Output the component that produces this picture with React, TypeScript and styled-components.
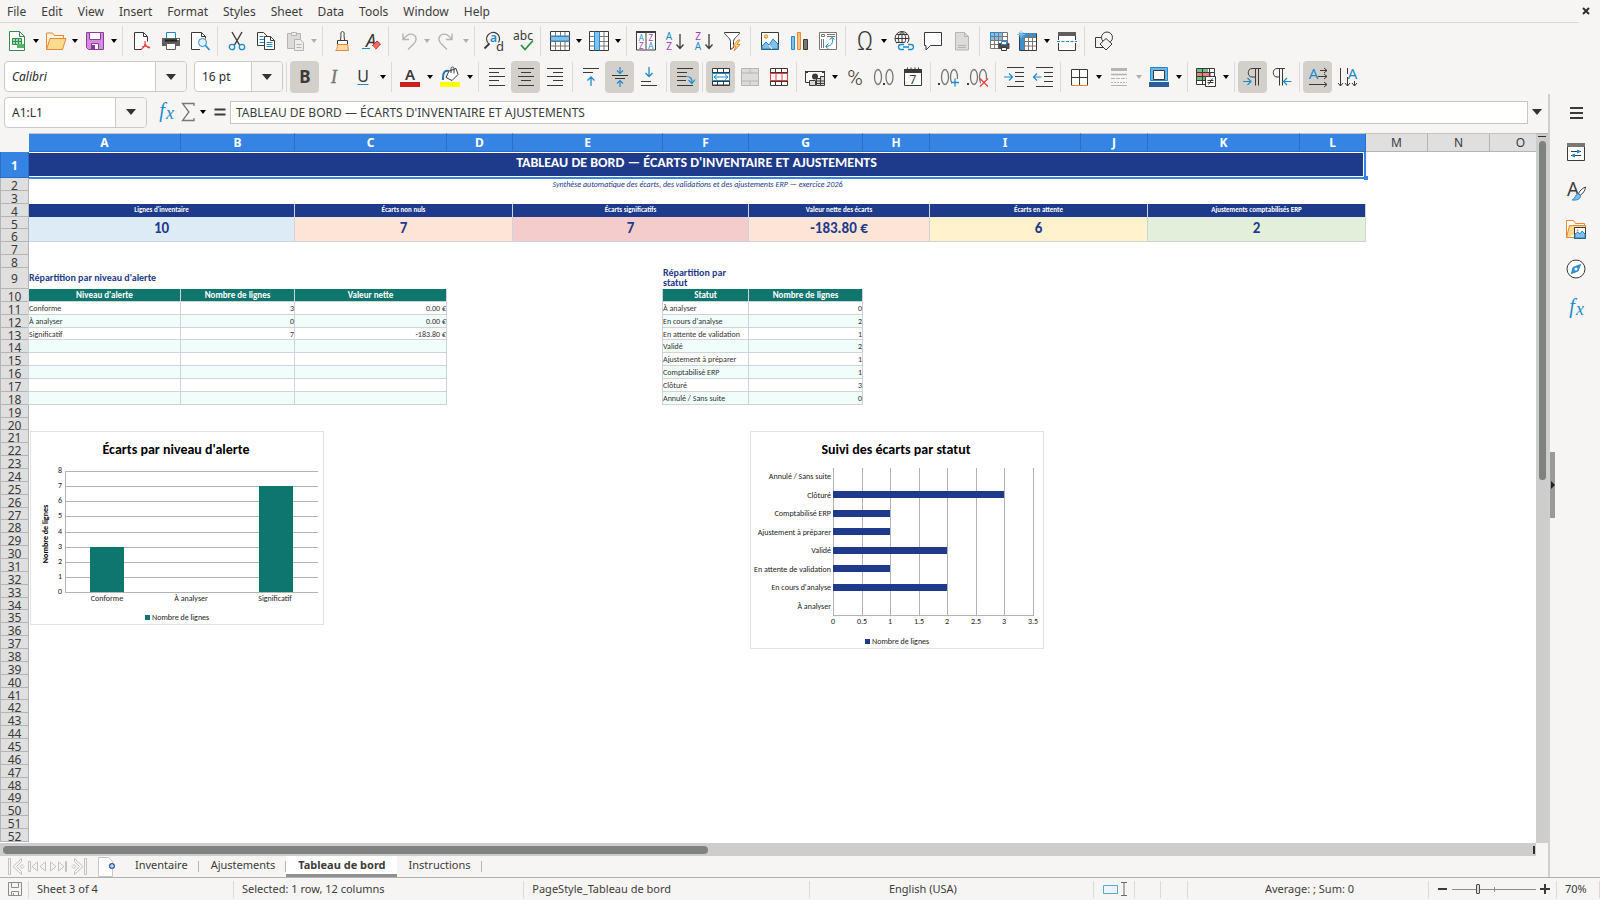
import React from 'react';
import styled, { createGlobalStyle, css } from 'styled-components';

const UI = '"Noto Sans", "Open Sans", sans-serif';
const CELL = 'Carlito, Lato, "Noto Sans", sans-serif';
const INK = '#3a3a38';
const GREY = '#797774';
const BLUE = '#1e8bcd';
const SKY = '#83beec';
const ORANGE = '#ed8733';
const RED = '#ed3d3b';
const GREEN = '#309048';
const PURPLE = '#a33eb5';
const DIM = '#b5b4b2';
const NAVY = '#1e3a8a';
const TEAL = '#0f766e';
const LINE = '#cfd4da';

const Global = createGlobalStyle`
  *, *::before, *::after { box-sizing: border-box; }
  html, body { margin: 0; }
  body { background: #f6f5f4; font-family: ${UI}; color: #3d3d3b; }
  button, input, select { font: inherit; color: inherit; margin: 0; padding: 0; border: 0; background: none; }
`;

/* ---------- icons ---------- */

const p = (d: string, stroke: string = INK, fill = 'none', w = 1) => (
  <path d={d} stroke={stroke} fill={fill} strokeWidth={w} />
);
const t = (x: number, y: number, size: number, text: string, fill: string = INK, extra: React.SVGProps<SVGTextElement> = {}) => (
  <text x={x} y={y} fontSize={size} fill={fill} stroke="none" textAnchor="middle" fontFamily={UI} {...extra}>
    {text}
  </text>
);
const serif = { fontFamily: '"Liberation Serif", serif' };
const light = { fontFamily: 'Roboto, sans-serif', fontWeight: 300 };
const ring = (cx: number, cy: number) => <ellipse cx={cx} cy={cy} rx="3.5" ry="7.5" fill="none" stroke={GREY} strokeWidth="1.3" />;
const dot = (x: number, y: number) => <rect x={x} y={y} width="2" height="2" fill={INK} />;

const gridBox = 'M2.5 2.5h19v19h-19z';

const icons: Record<string, React.ReactNode> = {
  newDoc: (<>
    {p('M4.5 2.5h10l5 5v14h-15z', GREEN, '#fff')}{p('M14.5 2.5v5h5', GREEN)}
    {p('M7.5 9.5h9v3h-9zM7.5 12.5h9v3h-9zM10.5 9.5v6M13.5 9.5v6', GREEN, '#a8dcb5')}
    {p('M12 15h7v4h-7z', 'none', '#58b36d')}
  </>),
  open: (<>
    {p('M2.5 20.5v-16.5h6l2 2.5h9v3', ORANGE, '#fdf3de')}{p('M2.5 20.5l3.5-11h16l-3.5 11z', ORANGE, '#f8db8f')}
  </>),
  save: (<>
    {p('M3.5 3.5h17v17h-15l-2-2z', '#8c3a9b', '#d58be0')}{p('M6.5 3.5h11v7h-11z', '#8c3a9b', '#fff')}
    {p('M8.5 20.5v-6h7v6z', '#8c3a9b', '#fff')}{p('M9 16h3v4h-3z', 'none', '#8c3a9b')}
  </>),
  pdf: (<>
    {p('M12 20.5h-7.5v-17h9l4 4v5', INK, '#fff')}{p('M13.5 3.5v4h4')}
    {p('M15 12c1 3-1 7-4 8.5M15 12c-.5 4 2 7 5 7M12 18c3-1.5 5-1 8 .5', RED, 'none', 1.2)}
  </>),
  print: (<>
    {p('M7.5 9.5v-6h9v6', BLUE, '#fff')}{p('M3 9h18v8h-18z', 'none', '#5f5e5c')}
    {p('M6 11.5h12', '#222', 'none', 2)}{p('M7.5 14.5h9v6h-9z', '#5f5e5c', '#fff')}{p('M18 10.5h2', '#fff')}
  </>),
  preview: (<>
    {p('M12 20.5h-8.5v-17h10l4 4v2', INK, '#fff')}{p('M13.5 3.5v4h4')}
    <circle cx="14.5" cy="13.5" r="4" fill="#e6f2fb" stroke={BLUE} />{p('M17.5 16.5l4 4.5', BLUE, 'none', 1.6)}
  </>),
  cut: (<>
    {p('M7 3l7.5 13M17 3l-7.5 13', INK, 'none', 1.4)}
    <circle cx="7" cy="18" r="2.7" fill="none" stroke={BLUE} strokeWidth="1.3" /><circle cx="17" cy="18" r="2.7" fill="none" stroke={BLUE} strokeWidth="1.3" />
  </>),
  copy: (<>
    {p('M3.5 3.5h6l4 4v9h-10z', INK, '#fff')}{p('M5.5 7.5h4M5.5 10.5h5M5.5 13.5h5', BLUE)}
    {p('M10.5 7.5h6l4 4v9h-10z', INK, '#fff')}{p('M16.5 7.5v4h4')}{p('M12.5 13.5h6M12.5 15.5h6M12.5 17.5h6', BLUE)}
  </>),
  paste: (<>
    {p('M4.5 4.5h13v15h-13z', DIM, '#dcdbd9')}{p('M8.5 6.5v-3h5v3z', DIM, '#eee')}{p('M11.5 10.5h6l3 3v8h-9z', DIM, '#ececea')}
    {p('M13.5 15.5h5M13.5 18.5h5', DIM)}
  </>),
  brush: (<>
    {p('M10.5 11.5l.5-5c-.5-2 0-4 1.5-4s2 2 1.5 4l.5 5', INK, '#fff')}{p('M7.5 15.5v-4h10v4', INK, '#fff')}
    {p('M7.5 15.5h10l1 6h-13c1.5-1 2-3 2-6z', ORANGE, '#fbd9a8')}
  </>),
  clear: (<>
    {t(12, 18, 18, 'A', INK, { fontStyle: 'italic' })}{p('M3 19.5h8', BLUE)}{p('M13 17l5-5 3.5 3-5 5.5z', '#c33', '#f26a66')}{p('M13 17l3.5 3.5', '#fff')}
  </>),
  undo: p('M7 4.5v6h6M7.5 10c3-4 7-6 10.5-4 3.5 2.5 2 7-.5 9l-5.5 5.5', DIM, 'none', 1.4),
  redo: p('M17 4.5v6h-6M16.5 10c-3-4-7-6-10.5-4-3.5 2.5-2 7 .5 9l5.5 5.5', DIM, 'none', 1.4),
  find: (<>
    {t(11.5, 13, 12, 'a', BLUE, { fontWeight: 600 })}{p('M7 15a6.5 6.5 0 1 1 9.5-1.5', INK, 'none', 1.2)}{p('M7.5 14.5l-5 5', INK, 'none', 1.8)}{t(18, 21.5, 13, 'd', INK)}
  </>),
  spell: (<>{t(12, 11, 12, 'abc')}{p('M10 16l4 4.5 8-9', GREEN, 'none', 1.8)}</>),
  rows: (<>
    {p(gridBox, INK, '#fff')}{p('M3 7h18v5h-18z', 'none', SKY)}{p('M2.5 7.5h19M2.5 12.5h19M2.5 17h19M7.5 12v9M12.5 12v9M17 12v9M7.5 3v4M12.5 3v4M17 3v4', GREY)}
    {p('M2.5 7h19M2.5 12h19', BLUE)}
  </>),
  cols: (<>
    {p(gridBox, INK, '#fff')}{p('M7 3h5v18h-5z', 'none', SKY)}{p('M12 7.5h9M3 7.5h4M12 12.5h9M3 12.5h4M12 17h9M3 17h4M17 3v18', GREY)}
    {p('M7.5 2.5v19M12.5 2.5v19', BLUE)}
  </>),
  sort: (<>
    {p('M2.5 3.5h19v17.5h-19zM12 3.5v17', INK, '#fff')}{p('M2 3h20', INK, 'none', 2)}
    {t(7.2, 12, 8, 'A', BLUE)}{t(7.2, 20, 8, 'Z', PURPLE)}{t(16.8, 12, 8, 'Z', PURPLE)}{t(16.8, 20, 8, 'A', BLUE)}
  </>),
  az: (<>{t(6, 10.5, 10, 'A', BLUE)}{t(6, 21, 10, 'Z', PURPLE)}{p('M17 5v14M13.5 15.5l3.5 4 3.5-4', INK, 'none', 1.3)}</>),
  za: (<>{t(6, 10.5, 10, 'Z', PURPLE)}{t(6, 21, 10, 'A', BLUE)}{p('M17 5v14M13.5 15.5l3.5 4 3.5-4', INK, 'none', 1.3)}</>),
  filter: (<>{p('M3.5 3.5h15c0 3-6 5-6 9v6l-3 2v-8c0-4-6-6-6-9z', INK, '#fff')}{p('M17 11l-5 6h3l-2 5 6-6.5h-3l3-4.5z', ORANGE, '#f8db8f')}</>),
  image: (<>
    {p('M3.5 3.5h17v17h-17z', INK, '#fff')}<circle cx="8" cy="7.5" r="1.7" fill="#f8db8f" stroke={ORANGE} />
    {p('M4 20v-3l4-4 3 3 4-6 5 5v5z', BLUE, SKY)}{p('M11 16l3 4', '#fff')}
  </>),
  chart: (<>{p('M4.5 7.5h3v13h-3z', BLUE, SKY)}{p('M10.5 3.5h3v17h-3z', ORANGE, '#f8c27a')}{p('M16.5 10.5h4v10h-4z', INK, GREY)}</>),
  pivot: (<>
    {p('M3.5 3.5h17v17h-17z', GREY, '#fff')}{p('M5.5 5.5h3v2h-3z', GREY)}{p('M11 5.5h8M11 7.5h8M5.5 10v9M7.5 10v9', GREY)}
    {p('M16 9c2 5-1 8-6 8.5M13.5 10.5l2.5-2 2.5 2M12.5 14.5l-3 3 3 2.5', BLUE)}
  </>),
  omega: t(12, 21, 25, 'Ω', INK, light),
  link: (<>
    <circle cx="10" cy="9.5" r="7" fill="none" stroke={INK} />{p('M10 2.5c-5 4-5 10 0 14M10 2.5c5 4 5 10 0 14M3 9.5h14M4 5.5h12M4 13.5h8M10 2.5v14')}
    {p('M5 14h18v8h-18z', 'none', '#f6f5f4')}
    {p('M12 20.5h-3a2.5 2.5 0 0 1 0-5h3M16 20.5h3a2.5 2.5 0 0 0 0-5h-3M11 18h6', BLUE, 'none', 1.3)}
  </>),
  comment: p('M3.5 3.5h17v13h-11l-4.5 4.5v-4.5h-1.5z', INK, '#fff'),
  header: (<>{p('M5.5 3.5h9l4 4v13.5h-13z', DIM, '#dcdbd9')}{p('M14.5 3.5v4h4M8 16.5h8M8 18.5h8', DIM)}</>),
  prange: (<>
    {p('M3.5 3.5h17v16h-17z', GREY, '#fff')}{p('M3.5 3.5h12v8h-12z', BLUE, SKY)}{p('M3.5 7.5h17M3.5 11.5h17M3.5 15.5h17M7.5 3.5v16M11.5 3.5v16M15.5 3.5v16', GREY)}
    {p('M12 14.5h10v5h-10z', '#4c4b49', '#4c4b49')}{p('M14.5 12.5h5v3h-5z', BLUE, '#fff')}{p('M14.5 18.5h5v3h-5z', INK, '#fff')}
  </>),
  freeze: (<>
    {p('M3.5 4.5h17v17h-17z', INK, '#fff')}{p('M4 4h16v4h-16zM4 8h4v13h-4z', 'none', '#3d8fce')}
    {p('M8 8.5h12M8 12.5h12M8 17h12M8.5 8v13M12.5 4v17M16.5 4v17', GREY)}{p('M5 1.5v8M1 5.5h8M2.5 3l5 5M7.5 3l-5 5', SKY)}
  </>),
  split: (<>{p('M3.5 3.5h17v18h-17z', INK, '#fff')}{p('M3 3h18v4h-18z', 'none', '#5f5e5c')}{p('M2 12.5h20', '#f6f5f4', 'none', 3)}<path d="M2 12.5h20" stroke={BLUE} strokeDasharray="3 1.5" /></>),
  shapes: (<>{p('M3.5 8.5h10v10h-10z')}<circle cx="15" cy="8.5" r="5.5" fill="#f6f5f4" stroke={INK} />{p('M14 9.5l6 5.5-6 6-6-6z', INK, '#f6f5f4')}</>),
  bold: t(12, 18, 17, 'B', INK, { fontWeight: 700 }),
  italic: t(12, 18, 18, 'I', GREY, { ...serif, fontStyle: 'italic', stroke: GREY, strokeWidth: 0.4 }),
  underline: (<>{t(12, 17, 16, 'U', INK)}{p('M6.5 19.5h11', BLUE)}</>),
  fontColor: (<>{t(12, 14.5, 15, 'A', INK, { fontWeight: 600 })}{p('M2 17h20v5h-20z', 'none', '#c9211e')}</>),
  highlight: (<>
    {p('M11 6l7-2.5 2 6-6 6-6-3z', INK, '#fff')}{p('M13 8v-4.5c0-2 3-2 3 0v5')}{p('M11 6c-4-1-6 1-6 7v2', '#2a6fae', 'none', 2)}{p('M2 17h20v5h-20z', 'none', '#ffff00')}
  </>),
  left: p('M4 3.5h16M4 7.5h10M4 11.5h16M4 15.5h10M4 20.5h16', INK),
  center: p('M4 3.5h16M7 7.5h10M4 11.5h16M7 15.5h10M4 20.5h16', INK),
  right: p('M4 3.5h16M10 7.5h10M4 11.5h16M10 15.5h10M4 20.5h16', INK),
  top: (<>{p('M4 3.5h16M4 7.5h10', INK)}{p('M12 21v-9M8.5 15.5l3.5-3.5 3.5 3.5', BLUE, 'none', 1.3)}</>),
  middle: (<>{p('M4 10.5h16M7 13.5h10', INK)}{p('M12 2v6M9 5.5l3 3 3-3M12 22v-6M9 18.5l3-3 3 3', BLUE, 'none', 1.2)}</>),
  bottom: (<>{p('M4 16.5h10M4 20.5h16', INK)}{p('M12 2v9M8.5 8l3.5 3.5 3.5-3.5', BLUE, 'none', 1.3)}</>),
  wrap: (<>{p('M4 3.5h16M4 7.5h10M4 11.5h9M4 15.5h9M4 20.5h16', INK)}{p('M13 11.5c5 0 6 2 6 6M15.5 15l3.5 3.5 3-4', BLUE, 'none', 1.2)}</>),
  merge: (<>
    {p('M3.5 3.5h17v17h-17z', INK, '#fff')}{p('M3.5 7.5h17M3.5 16.5h17M8.5 3.5v4M14.5 3.5v4M8.5 16.5v4M14.5 16.5v4M3.5 20h17')}
    {p('M3.5 8.5h17v7h-17z', BLUE, '#fff')}{p('M5 12h14M8 9.5l-3 2.5 3 2.5M16 9.5l3 2.5-3 2.5', BLUE)}
  </>),
  unmerge: (<>{p('M3.5 3.5h17v17h-17z', DIM, '#dcdbd9')}{p('M3.5 8h17M3.5 16h17M12 3.5v4.5M12 16v4.5', DIM)}</>),
  mergeCells: (<>
    {p('M3.5 3.5h17v17h-17z', INK, '#fff')}{p('M3.5 7.5h17M3.5 16.5h17M8.5 3.5v4M14.5 3.5v4M8.5 16.5v4M14.5 16.5v4')}
    {p('M3.5 8.5h17v7h-17zM9 8.5v7M15 8.5v7', RED, '#fff')}
  </>),
  currency: (<>
    {p('M2.5 6.5h19v11h-19z', INK, '#fff')}<circle cx="12" cy="11.5" r="3" fill={INK} />{p('M2 6h3v2h-3zM19 6h3v2h-3z', 'none', INK)}
    {p('M6.5 15.5h6v5h-6zM13.5 13.5h4v7h-4zM17.5 11.5h4v9h-4zM13.5 16h8M13.5 18.5h8', INK, '#d9d8d6')}
  </>),
  percent: t(12, 19.5, 21, '%', INK, light),
  number: (<>{ring(6, 12)}{ring(17.5, 12)}{dot(11, 18)}</>),
  date: (<>{p('M3.5 5.5h17v15h-17z', INK, '#fff')}{p('M3 4h18v4h-18z', 'none', INK)}{p('M6.5 2.5v4M10 2.5v2M14 2.5v2M17.5 2.5v4', INK)}{t(12, 18.5, 12, '7')}</>),
  addDec: (<>{dot(1, 18)}{ring(8, 12)}{ring(17, 12)}{p('M15 14h8v8h-8z', 'none', '#f6f5f4')}{p('M14 17.5h8M18 13.5v8', BLUE, 'none', 1.3)}</>),
  delDec: (<>{dot(1, 18)}{ring(8, 12)}{ring(17, 12)}{p('M15 14h8v8h-8z', 'none', '#f6f5f4')}{p('M14 13.5l8 8M22 13.5l-8 8', RED, 'none', 1.3)}</>),
  indent: (<>{p('M5 2.5h17M13 7.5h9M13 11.5h9M13 16.5h9M5 21.5h17', INK)}{p('M2 12h8M7 8.5l3.5 3.5-3.5 3.5', BLUE, 'none', 1.2)}</>),
  outdent: (<>{p('M5 2.5h17M13 7.5h9M13 11.5h9M13 16.5h9M5 21.5h17', INK)}{p('M2.5 12h8M6 8.5l-3.5 3.5 3.5 3.5', BLUE, 'none', 1.2)}</>),
  borders: (<>{p('M4.5 4.5h16v16h-16zM12.5 4.5v16M4.5 12.5h16', INK, '#fff')}{p('M4 20.5h17', ORANGE)}</>),
  borderStyle: (<>{p('M4 4.5h16', DIM, 'none', 3)}{p('M4 9.5h16', DIM, 'none', 1.6)}<path d="M4 13.5h16" stroke={DIM} strokeDasharray="4 1" /><path d="M4 17.5h16" stroke={DIM} strokeDasharray="2 1" />{p('M4 20.5h16', DIM)}</>),
  borderColor: (<>{p('M3.5 2.5h17v13h-17z', BLUE, '#6ab6e8')}{p('M6.5 5.5h11v9h-11z', INK, '#fff')}{p('M2 17h20v5h-20z', 'none', '#2a6099')}</>),
  cond: (<>
    {p('M2.5 3.5h18v16h-18z', INK, '#fff')}{p('M3 4h11v4h-11z', 'none', '#6cc083')}{p('M3 8h14v4h-14z', 'none', '#f2827f')}{p('M3 12h8v4h-8z', 'none', '#6cc083')}
    {p('M2.5 7.5h18M2.5 11.5h9M2.5 15.5h9M8.5 3.5v16M15.5 3.5v8', INK)}{p('M11.5 11.5h10v10h-10z', INK, '#fff')}{p('M13.5 15.5h6M13.5 17.5h6M18.5 13.5l-4 6')}
  </>),
  ltr: (<>{p('M11 3.5h9M14.5 3.5v17M17.5 3.5v17M14 3.5h-3c-5 0-5 8.5 0 8.5h3', INK)}{p('M2 16.5h8M6.5 13l3.5 3.5-3.5 3.5', BLUE, 'none', 1.2)}</>),
  rtl: (<>{p('M7 3.5h8M9.5 3.5v17M12.5 3.5v17M9 3.5h-2c-5 0-5 8.5 0 8.5h2', INK)}{p('M13.5 16.5h8M17 13l-3.5 3.5 3.5 3.5', BLUE, 'none', 1.2)}</>),
  textH: (<>{t(7.5, 13.5, 15, 'A', BLUE)}{p('M14 5.5h7M18 3l3 2.5-3 2.5M12 11.5h9M18 9l3 2.5-3 2.5M3 19.5h18M18 17l3 2.5-3 2.5', INK)}</>),
  textV: (<>{t(17.5, 13.5, 15, 'A', BLUE)}{p('M5.5 3v18M3 18l2.5 3 2.5-3M12.5 3v6M12.5 12v9M10 18l2.5 3 2.5-3M19.5 16v5M17 18l2.5 3 2.5-3', INK)}</>),
  menu: p('M6 7h13M6 12h13M6 17h13', INK, 'none', 2),
  props: (<>{p('M3.5 3.5h17v17h-17z', INK, '#fff')}{p('M3 3h18v4h-18z', 'none', GREY)}{p('M7 11.5h10M7 15.5h10', INK)}{p('M13.5 10l2.5 1.5-2.5 1.5zM10.5 14l-2.5 1.5 2.5 1.5z', BLUE, BLUE)}</>),
  styles: (<>{t(9, 17, 19, 'A')}{p('M21.5 8c-3 1-6 4-7 6.5l2 1.5c2-1 5-5 5-8z', INK, '#fff')}{p('M14 14.5l2.5 2c0 4-4 5-8.5 4.5 3-1 3-5 6-6.5z', BLUE, SKY)}</>),
  gallery: (<>
    {p('M2.5 19.5v-17h7l2 3h9v4', ORANGE, '#fff')}{p('M2.5 19.5l3-12h16v4', ORANGE, '#f8db8f')}{p('M2.5 19.5h8', ORANGE)}
    {p('M10.5 9.5h11v11h-11z', INK, '#fff')}{p('M11 20v-4l3-2 2 2 2-3 3 3v4z', BLUE, SKY)}<circle cx="13.5" cy="12.5" r="1" fill={ORANGE} />
  </>),
  compass: (<><circle cx="12" cy="12" r="9" fill="#fff" stroke={INK} />{p('M16.5 7.5l-2.5 6.5-6.5 2.5 1.5-6z', BLUE, '#3d8fce')}<circle cx="12" cy="12" r="1.5" fill="#fff" /></>),
  fx: (<>{t(8, 17, 20, 'f', BLUE, { ...serif, fontStyle: 'italic' })}{t(16, 19, 18, 'x', BLUE, { ...serif, fontStyle: 'italic' })}</>),
  sum: p('M17 6v-2.5h-11.5l6.5 8.5-6.5 8.5h11.5v-2.5', GREY, 'none', 1.3),
  equals: p('M6.5 9.5h11M6.5 14.5h11', INK, 'none', 2),
};

const Svg = styled.svg`
  display: block;
  flex: none;
  fill: none;
  overflow: visible;
`;
const Icon = ({ name }: { name: string }) => (
  <Svg width="24" height="24" viewBox="0 0 24 24" aria-hidden="true">{icons[name]}</Svg>
);
const Caret = ({ dim, large }: { dim?: boolean; large?: boolean }) => (
  <Svg width={large ? 10 : 6} height={large ? 6 : 4} viewBox="0 0 10 6" preserveAspectRatio="none" aria-hidden="true">
    <path d="M0 0h10l-5 6z" fill={dim ? '#b0afad' : large ? '#333' : '#000'} />
  </Svg>
);

/* ---------- frame ---------- */

const Window = styled.div`
  display: flex;
  flex-direction: column;
  height: 100vh;
  overflow: hidden;
  background: #f6f5f4;
`;
const MenuBar = styled.nav`
  display: flex;
  align-items: center;
  height: 22px;
  flex: none;
  padding-right: 8px;
`;
const MenuItem = styled.button`
  height: 22px;
  padding: 1px 8px 0 7px;
  font-size: 12px;
  line-height: 21px;
`;
const CloseButton = styled.button`
  display: grid;
  place-items: center;
  width: 12px;
  height: 22px;
  margin-left: auto;
`;
const Toolbar = styled.div<{ $first?: boolean }>`
  display: flex;
  align-items: center;
  flex: none;
  height: ${(q) => (q.$first ? 37 : 35)}px;
  padding-left: ${(q) => (q.$first ? 2 : 4)}px;
  ${(q) => q.$first && css`border-top: 1px solid #d9d8d6; margin-right: 21px;`}
`;
const ToolButton = styled.button<{ $on?: boolean }>`
  display: grid;
  place-items: center;
  flex: none;
  width: 29px;
  height: 32px;
  border-radius: 4px;
  background: ${(q) => (q.$on ? '#d3d0cc' : 'transparent')};
`;
const DropButton = styled.button<{ $snug?: boolean }>`
  display: grid;
  place-items: center;
  flex: none;
  width: ${(q) => (q.$snug ? 11 : 10)}px;
  height: 32px;
`;
const Divider = styled.span<{ $snug?: boolean }>`
  flex: none;
  width: 1px;
  height: 30px;
  margin: 0 ${(q) => (q.$snug ? 3 : 4)}px 0 3px;
  background: #dcdad8;
`;
const Combo = styled.label<{ $w: number }>`
  display: flex;
  flex: none;
  width: ${(q) => q.$w}px;
  height: 31px;
  border: 1px solid #cdc9c5;
  border-radius: 4px;
  background: #fff;
  overflow: hidden;
  font-size: 12px;
`;
const comboField = css`
  flex: 1;
  min-width: 0;
  padding: 0 7px;
  outline: none;
  color: #2b2b2b;
`;
const ComboSelect = styled.select<{ $italic?: boolean }>`
  ${comboField}
  appearance: none;
  font-style: ${(q) => (q.$italic ? 'italic' : 'normal')};
`;
const ComboInput = styled.input`
  ${comboField}
`;
const ComboArrow = styled.span`
  display: grid;
  place-items: center;
  width: 31px;
  border-left: 1px solid #cdc9c5;
  background: #f6f5f4;
`;
const Gap = styled.span`
  width: 7px;
  flex: none;
`;

const Middle = styled.div`
  display: flex;
  flex: 1;
  min-height: 0;
`;
const Work = styled.main`
  display: flex;
  flex-direction: column;
  flex: 1;
  min-width: 0;
`;
const FormulaBar = styled.div`
  display: flex;
  align-items: center;
  flex: none;
  height: 39px;
  padding: 0 6px 3px 4px;
`;
const SmallButton = styled.button<{ $w: number }>`
  display: grid;
  place-items: center;
  flex: none;
  width: ${(q) => q.$w}px;
  height: 28px;
`;
const FormulaInput = styled.input`
  flex: 1;
  min-width: 0;
  height: 23px;
  margin-right: 3px;
  padding: 0 5px;
  border: 1px solid #c8c6c3;
  background: #fff;
  font-size: 12px;
  outline: none;
`;

const SideBar = styled.aside`
  position: relative;
  display: flex;
  flex-direction: column;
  align-items: center;
  flex: none;
  width: 52px;
  padding: 3px 0 0 2px;
  gap: 7px;
  border-left: 2px solid #cfcfce;
`;
const SideButton = styled.button`
  display: grid;
  place-items: center;
  width: 32px;
  height: 32px;
`;
const SideHandle = styled.span`
  position: absolute;
  left: 0;
  top: 50%;
  display: grid;
  place-items: center;
  width: 5px;
  height: 66px;
  margin-top: -34px;
  background: #9a9a99;
`;

/* ---------- sheet ---------- */

const SheetRow = styled.div`
  display: flex;
  flex: 1;
  min-height: 0;
`;
const columnWidths = [152, 114, 152, 66, 150, 86, 114, 67, 151, 67, 152, 66, 62, 62, 62];
const rowHeight = (n: number) => (n === 1 ? 26 : n === 9 ? 21 : n === 5 || (n > 9 && n % 7 === 6) ? 12 : 13);
const rows = Array.from({ length: 52 }, (_, i) => i + 1);

const Sheet = styled.section`
  display: grid;
  flex: 1;
  min-width: 0;
  overflow: hidden;
  align-content: start;
  grid-template-columns: 29px ${columnWidths.map((w) => `${w}px`).join(' ')};
  grid-template-rows: 19px ${rows.map((n) => `${rowHeight(n)}px`).join(' ')};
  background: #fff;
  font-family: ${CELL};
`;
const Corner = styled.div`
  grid-area: 1 / 1;
  background: #f6f5f4;
`;
const header = css<{ $on?: boolean }>`
  display: grid;
  place-items: center;
  font-family: ${UI};
  font-size: 12px;
  line-height: 12px;
  color: ${(q) => (q.$on ? '#fff' : '#3a3a3a')};
  font-weight: ${(q) => (q.$on ? 700 : 400)};
  background: ${(q) => (q.$on ? '#3584e4' : '#dfdfdf')};
  border: 0 solid ${(q) => (q.$on ? '#2c6fc2' : '#b4b4b4')};
`;
const ColumnHead = styled.div<{ $on?: boolean }>`
  ${header}
  grid-row: 1;
  border-width: 1px 1px 1px 0;
  border-top-color: #c4c4c4;
`;
const RowHead = styled.div<{ $on?: boolean }>`
  ${header}
  grid-column: 1;
  padding-top: 2px;
  border-width: 0 1px 1px 1px;
`;

type Area = { $c: number; $r: number; $cs?: number; $rs?: number };
const area = css<Area>`
  grid-column: ${(q) => q.$c + 1} / span ${(q) => q.$cs ?? 1};
  grid-row: ${(q) => q.$r + 1} / span ${(q) => q.$rs ?? 1};
`;
const TitleCell = styled.h1<Area>`
  ${area}
  position: relative;
  display: grid;
  place-items: center;
  margin: 0;
  padding-bottom: 4px;
  background: ${NAVY};
  border-right: 2px solid #3584e4;
  border-bottom: 1px solid #3584e4;
  box-shadow: inset 0 1px #fff, inset 0 -1px #fff, inset -1px 0 #fff, 0 1px #3584e4;
  color: #fff;
  font-size: 14px;
  line-height: 18px;
  font-weight: 700;
`;
const FillHandle = styled.i`
  position: absolute;
  right: -4px;
  bottom: -3px;
  width: 4px;
  height: 4px;
  background: #3584e4;
`;
const Subtitle = styled.p<Area>`
  ${area}
  margin: 0;
  text-align: center;
  font-size: 8px;
  line-height: 13px;
  font-style: italic;
  color: ${NAVY};
`;
const KpiLabel = styled.div<Area>`
  ${area}
  text-align: center;
  font-size: 7px;
  line-height: 12px;
  font-weight: 700;
  color: #fff;
  background: ${NAVY};
  border-right: 1px solid ${LINE};
`;
const KpiValue = styled.div<Area & { $bg: string }>`
  ${area}
  text-align: center;
  font-size: 15px;
  line-height: 23px;
  font-weight: 700;
  color: ${NAVY};
  background: ${(q) => q.$bg};
  border: solid ${LINE};
  border-width: 0 1px 1px 0;
`;
const SectionTitle = styled.h2<Area>`
  ${area}
  align-self: center;
  margin: 0;
  padding: 0 10px 1px 0;
  font-size: 10px;
  line-height: 10px;
  font-weight: 700;
  color: ${NAVY};
`;
const DataTable = styled.table<Area>`
  ${area}
  display: grid;
  grid-template: subgrid / subgrid;
  box-shadow: -1px 0 ${LINE};
  thead, tbody, tr { display: contents; }
`;
const HeadCell = styled.th`
  padding: 0;
  font-size: 9px;
  line-height: 12px;
  font-weight: 700;
  color: #fff;
  background: ${TEAL};
  border: solid ${LINE};
  border-width: 0 1px 1px 0;
`;
const BodyCell = styled.td<{ $alt: boolean; $num?: boolean }>`
  padding: 0;
  font-size: 8px;
  line-height: 12px;
  white-space: nowrap;
  text-align: ${(q) => (q.$num ? 'right' : 'left')};
  color: #333;
  background: ${(q) => (q.$alt ? '#f0fdfa' : '#fff')};
  border: solid ${LINE};
  border-width: 0 1px 1px 0;
`;
const ChartFrame = styled.figure<Area>`
  ${area}
  justify-self: start;
  align-self: start;
  margin: 1px;
  border: 1px solid #e2e2e2;
  background: #fff;
`;

const kpis = [
  { label: "Lignes d'inventaire", value: '10', c: 1, cs: 2, bg: '#ddebf7' },
  { label: 'Écarts non nuls', value: '7', c: 3, cs: 2, bg: '#fce4d6' },
  { label: 'Écarts significatifs', value: '7', c: 5, cs: 2, bg: '#f4cccc' },
  { label: 'Valeur nette des écarts', value: '-183.80 €', c: 7, cs: 2, bg: '#fce4d6' },
  { label: 'Écarts en attente', value: '6', c: 9, cs: 2, bg: '#fff2cc' },
  { label: 'Ajustements comptabilisés ERP', value: '2', c: 11, cs: 2, bg: '#e2efda' },
];
const alerts = [
  ['Conforme', '3', '0.00 €'],
  ['À analyser', '0', '0.00 €'],
  ['Significatif', '7', '-183.80 €'],
  ...Array.from({ length: 5 }, () => ['', '', '']),
];
const statuses = [
  ['À analyser', '0'],
  ["En cours d'analyse", '2'],
  ['En attente de validation', '1'],
  ['Validé', '2'],
  ['Ajustement à préparer', '1'],
  ['Comptabilisé ERP', '1'],
  ['Clôturé', '3'],
  ['Annulé / Sans suite', '0'],
];

const Table = ({ heads, data, c }: { heads: string[]; data: string[][]; c: number }) => (
  <DataTable $c={c} $r={10} $cs={heads.length} $rs={9}>
    <thead><tr>{heads.map((h) => <HeadCell key={h} scope="col">{h}</HeadCell>)}</tr></thead>
    <tbody>
      {data.map((line, i) => (
        <tr key={i}>{line.map((v, j) => <BodyCell key={j} $alt={i % 2 === 1} $num={j > 0}>{v}</BodyCell>)}</tr>
      ))}
    </tbody>
  </DataTable>
);

const ChartText = styled.text<{ $title?: boolean; $bold?: boolean }>`
  font-family: ${CELL};
  font-size: ${(q) => (q.$title ? 14 : 8)}px;
  font-weight: ${(q) => (q.$title || q.$bold ? 700 : 400)};
  fill: ${(q) => (q.$title || q.$bold ? '#000' : '#222')};
`;

const AlertChart = () => {
  const base = 160;
  const y = (v: number) => Math.round(base - (v * 121) / 8);
  return (
    <Svg width="292" height="192" viewBox="0 0 292 192" role="img" aria-label="Écarts par niveau d'alerte">
      <ChartText $title x="145" y="22" textAnchor="middle">Écarts par niveau d'alerte</ChartText>
      {[0, 1, 2, 3, 4, 5, 6, 7, 8].map((v) => (
        <React.Fragment key={v}>
          <path d={`M34 ${y(v) + 0.5}h253`} stroke="#b3b3b3" />
          <ChartText x="31" y={y(v) + 2} textAnchor="end">{v}</ChartText>
        </React.Fragment>
      ))}
      <path d="M34.5 39v121" stroke="#b3b3b3" />
      <rect x="59" y={y(3)} width="34" height={base - y(3)} fill={TEAL} />
      <rect x="228" y={y(7)} width="34" height={base - y(7)} fill={TEAL} />
      {['Conforme', 'À analyser', 'Significatif'].map((s, i) => (
        <ChartText key={s} x={76 + i * 84} y="169" textAnchor="middle">{s}</ChartText>
      ))}
      <ChartText $bold transform="translate(17 102) rotate(-90)" textAnchor="middle">Nombre de lignes</ChartText>
      <rect x="114" y="183" width="5" height="5" fill={TEAL} />
      <ChartText x="121" y="188">Nombre de lignes</ChartText>
    </Svg>
  );
};

const StatusChart = () => {
  const x = (v: number) => Math.round(82 + (v * 200) / 3.5);
  return (
    <Svg width="292" height="216" viewBox="0 0 292 216" role="img" aria-label="Suivi des écarts par statut">
      <ChartText $title x="145" y="22" textAnchor="middle">Suivi des écarts par statut</ChartText>
      {[0, 0.5, 1, 1.5, 2, 2.5, 3, 3.5].map((v) => (
        <React.Fragment key={v}>
          <path d={`M${x(v) + 0.5} 36v148`} stroke="#b3b3b3" />
          <ChartText x={x(v)} y="192" textAnchor="middle">{v}</ChartText>
        </React.Fragment>
      ))}
      <path d="M82 183.5h201" stroke="#b3b3b3" />
      {[...statuses].reverse().map(([name, n], i) => (
        <React.Fragment key={name}>
          <ChartText x="80" y={Math.round(47 + i * 18.5)} textAnchor="end">{name}</ChartText>
          <rect x="82" y={Math.round(59 + (i - 1) * 18.5)} width={Number(n) ? x(Number(n)) - 82 : 0} height="7" fill={NAVY} />
        </React.Fragment>
      ))}
      <rect x="114" y="207" width="5" height="5" fill={NAVY} />
      <ChartText x="121" y="212">Nombre de lignes</ChartText>
    </Svg>
  );
};

/* ---------- scroll bars, tabs, status ---------- */

const VScroll = styled.div`
  display: flex;
  flex-direction: column;
  align-items: center;
  gap: 4px;
  flex: none;
  width: 12px;
  padding-top: 2px;
  border-top: 1px solid #b4b4b4;
  background: #cdcdcd;
`;
const VThumb = styled.div`
  width: 7px;
  height: 48%;
  border-radius: 4px;
  background: #7f8281;
`;
const HScroll = styled.div`
  display: flex;
  justify-content: space-between;
  align-items: center;
  flex: none;
  height: 13px;
  margin-right: 12px;
  padding: 0 1px 0 3px;
  background: #cdcdcd;
`;
const HThumb = styled.div`
  width: 46%;
  height: 8px;
  border-radius: 4px;
  background: #7f8281;
`;
const Grip = styled.i<{ $flat?: boolean }>`
  width: ${(q) => (q.$flat ? 8 : 2)}px;
  height: ${(q) => (q.$flat ? 1 : 8)}px;
  background: #2f2f2f;
`;
const TabBar = styled.div`
  display: flex;
  align-items: stretch;
  flex: none;
  height: 21px;
  padding-left: 8px;
`;
const TabNav = styled.button<{ $w: number }>`
  display: grid;
  place-items: center;
  width: ${(q) => q.$w}px;
`;
const Tab = styled.button<{ $on?: boolean }>`
  position: relative;
  padding: 0 11px 0 12px;
  font-size: 11px;
  line-height: 18px;
  font-weight: ${(q) => (q.$on ? 700 : 400)};
  background: ${(q) => (q.$on ? '#fff' : 'transparent')};
  border-bottom: 3px solid ${(q) => (q.$on ? '#8f9190' : 'transparent')};
  &::after {
    content: '';
    position: absolute;
    right: 0;
    top: 5px;
    width: 1px;
    height: 11px;
    background: ${(q) => (q.$on ? 'transparent' : '#b5b5b4')};
  }
`;
const StatusBar = styled.footer`
  display: flex;
  flex: none;
  height: 23px;
  border-top: 1px solid #b0b0af;
  font-size: 11px;
  line-height: 22px;
`;
const StatusCell = styled.div<{ $w: number; $grow?: boolean; $align?: string; $bare?: boolean }>`
  display: flex;
  align-items: center;
  justify-content: ${(q) => q.$align ?? 'flex-start'};
  flex: ${(q) => (q.$grow ? `${q.$w} 1 0` : `0 0 ${q.$w}px`)};
  min-width: 0;
  padding: 0 6px 0 8px;
  white-space: nowrap;
  ${(q) => !q.$bare && css`background: linear-gradient(#dcdad8, #dcdad8) right 3px / 1px 17px no-repeat;`}
`;
const ZoomButton = styled.button`
  display: grid;
  place-items: center;
  width: 12px;
  height: 20px;
`;
const ZoomRange = styled.input`
  appearance: none;
  flex: 1;
  min-width: 0;
  height: 16px;
  margin: 0 3px;
  background:
    linear-gradient(#8c8b89, #8c8b89) center / 1px 5px no-repeat,
    linear-gradient(#8c8b89, #8c8b89) center / 100% 1px no-repeat;
  &::-webkit-slider-thumb {
    appearance: none;
    width: 4px;
    height: 10px;
    border: 1px solid #4a4a48;
    border-radius: 1px;
    background: #dcdcda;
  }
`;

type Tool = '|' | { icon: string; label: string; drop?: boolean; on?: boolean; dim?: boolean };
const T = (icon: string, label: string, o: { drop?: boolean; on?: boolean; dim?: boolean } = {}): Tool => ({ icon, label, ...o });
const drop = { drop: true };
const on = { on: true };

const standard: Tool[] = [
  T('newDoc', 'New', drop), T('open', 'Open', drop), T('save', 'Save', drop), '|',
  T('pdf', 'Export as PDF'), T('print', 'Print'), T('preview', 'Print preview'), '|',
  T('cut', 'Cut'), T('copy', 'Copy'), T('paste', 'Paste', { drop: true, dim: true }), '|',
  T('brush', 'Clone formatting'), T('clear', 'Clear formatting'), '|',
  T('undo', 'Undo', { drop: true, dim: true }), T('redo', 'Redo', { drop: true, dim: true }), '|',
  T('find', 'Find and replace'), T('spell', 'Spelling'), '|',
  T('rows', 'Row', drop), T('cols', 'Column', drop), '|',
  T('sort', 'Sort'), T('az', 'Sort ascending'), T('za', 'Sort descending'), T('filter', 'AutoFilter'), '|',
  T('image', 'Insert image'), T('chart', 'Insert chart'), T('pivot', 'Insert pivot table'), '|',
  T('omega', 'Special character', drop), T('link', 'Insert hyperlink'), T('comment', 'Insert comment'), T('header', 'Headers and footers', { dim: true }), '|',
  T('prange', 'Define print area'), T('freeze', 'Freeze rows and columns', drop), T('split', 'Split window'), '|',
  T('shapes', 'Show draw functions'),
];
const formatting: Tool[] = [
  T('bold', 'Bold', on), T('italic', 'Italic'), T('underline', 'Underline', drop), '|',
  T('fontColor', 'Font color', drop), T('highlight', 'Background color', drop), '|',
  T('left', 'Align left'), T('center', 'Center horizontally', on), T('right', 'Align right'), '|',
  T('top', 'Align top'), T('middle', 'Center vertically', on), T('bottom', 'Align bottom'), '|',
  T('wrap', 'Wrap text', on), '|',
  T('merge', 'Merge and center', on), T('unmerge', 'Merge cells', { dim: true }), T('mergeCells', 'Unmerge cells'), '|',
  T('currency', 'Currency', drop), T('percent', 'Percent'), T('number', 'Number'), T('date', 'Date'), '|',
  T('addDec', 'Add decimal place'), T('delDec', 'Delete decimal place'), '|',
  T('indent', 'Increase indent'), T('outdent', 'Decrease indent'), '|',
  T('borders', 'Borders', drop), T('borderStyle', 'Border style', { drop: true, dim: true }), T('borderColor', 'Border color', drop), '|',
  T('cond', 'Conditional formatting', drop), '|',
  T('ltr', 'Left-to-right', on), T('rtl', 'Right-to-left'), '|',
  T('textH', 'Horizontal text', on), T('textV', 'Vertical text'),
];

const Tools = ({ items, snug }: { items: Tool[]; snug?: boolean }) => (
  <>
    {items.map((it, i) =>
      it === '|' ? (
        <Divider key={i} $snug={snug} />
      ) : (
        <React.Fragment key={i}>
          <ToolButton type="button" aria-label={it.label} aria-pressed={it.on} disabled={it.dim} $on={it.on}>
            <Icon name={it.icon} />
          </ToolButton>
          {it.drop && (
            <DropButton type="button" aria-label={`${it.label} options`} disabled={it.dim} $snug={snug}>
              <Caret dim={it.dim} />
            </DropButton>
          )}
        </React.Fragment>
      ),
    )}
  </>
);

const navPaths = [
  { label: 'First sheet', w: 20, d: 'M.5 1.5h2v16h-2zM13.5 1.5l-8.5 8 8.5 8M13.5 1.5v3l-5 5 5 5v3M14 7.5l-2 2 2 2 2-2z' },
  { label: 'Previous sheet', w: 20, d: 'M.5 4.5h2v10h-2zM9.5 5l-5.5 4.5 5.5 4.5zM17.5 5l-5.5 4.5 5.5 4.5z' },
  { label: 'Next sheet', w: 20, d: 'M2.5 5l5.5 4.5-5.5 4.5zM10.5 5l5.5 4.5-5.5 4.5zM17.5 4.5h1v10h-1z' },
  { label: 'Last sheet', w: 20, d: 'M6.5 1.5l8.5 8-8.5 8M6.5 1.5v3l5 5-5 5v3M6 7.5l-2 2 2 2 2-2zM16.5 1.5h2v16h-2z' },
];

export default function App() {
  return (
    <Window>
      <Global />
      <MenuBar aria-label="Menu">
        {['File', 'Edit', 'View', 'Insert', 'Format', 'Styles', 'Sheet', 'Data', 'Tools', 'Window', 'Help'].map((m) => (
          <MenuItem key={m} type="button">{m}</MenuItem>
        ))}
        <CloseButton type="button" aria-label="Close document">
          <Svg width="8" height="8" viewBox="0 0 8 8">{p('M1 1l6 6M7 1l-6 6', '#2e2e2c', 'none', 2)}</Svg>
        </CloseButton>
      </MenuBar>
      <Toolbar $first role="toolbar" aria-label="Standard">
        <Tools items={standard} />
      </Toolbar>
      <Toolbar role="toolbar" aria-label="Formatting">
        <Combo $w={183}>
          <ComboSelect $italic aria-label="Font name"><option>Calibri</option></ComboSelect>
          <ComboArrow><Caret large /></ComboArrow>
        </Combo>
        <Gap />
        <Combo $w={89}>
          <ComboSelect aria-label="Font size"><option>16 pt</option></ComboSelect>
          <ComboArrow><Caret large /></ComboArrow>
        </Combo>
        <Divider $snug />
        <Tools items={formatting} snug />
      </Toolbar>
      <Middle>
        <Work>
          <FormulaBar>
            <Combo $w={143}>
              <ComboInput aria-label="Name box" defaultValue="A1:L1" />
              <ComboArrow><Caret large /></ComboArrow>
            </Combo>
            <Gap />
            <SmallButton type="button" $w={23} aria-label="Function wizard"><Icon name="fx" /></SmallButton>
            <SmallButton type="button" $w={20} aria-label="Select function"><Icon name="sum" /></SmallButton>
            <SmallButton type="button" $w={11} aria-label="Select function options"><Caret /></SmallButton>
            <SmallButton type="button" $w={22} aria-label="Formula"><Icon name="equals" /></SmallButton>
            <FormulaInput aria-label="Input line" defaultValue="TABLEAU DE BORD — ÉCARTS D'INVENTAIRE ET AJUSTEMENTS" />
            <SmallButton type="button" $w={11} aria-label="Expand formula bar"><Caret large /></SmallButton>
          </FormulaBar>
          <SheetRow>
            <Sheet aria-label="Tableau de bord">
              <Corner />
              {'ABCDEFGHIJKLMNO'.split('').map((l, i) => <ColumnHead key={l} $on={i < 12}>{l}</ColumnHead>)}
              {rows.map((n) => <RowHead key={n} $on={n === 1}>{n}</RowHead>)}
              <TitleCell $c={1} $r={1} $cs={12}>TABLEAU DE BORD — ÉCARTS D'INVENTAIRE ET AJUSTEMENTS<FillHandle /></TitleCell>
              <Subtitle $c={1} $r={2} $cs={12}>Synthèse automatique des écarts, des validations et des ajustements ERP — exercice 2026</Subtitle>
              {kpis.map((k) => (
                <React.Fragment key={k.label}>
                  <KpiLabel $c={k.c} $r={4} $cs={k.cs}>{k.label}</KpiLabel>
                  <KpiValue $c={k.c} $r={5} $cs={k.cs} $rs={2} $bg={k.bg}>{k.value}</KpiValue>
                </React.Fragment>
              ))}
              <SectionTitle $c={1} $r={9}>Répartition par niveau d'alerte</SectionTitle>
              <SectionTitle $c={6} $r={9}>Répartition par statut</SectionTitle>
              <Table c={1} heads={["Niveau d'alerte", 'Nombre de lignes', 'Valeur nette']} data={alerts} />
              <Table c={6} heads={['Statut', 'Nombre de lignes']} data={statuses} />
              <ChartFrame $c={1} $r={21} $cs={3} $rs={16}><AlertChart /></ChartFrame>
              <ChartFrame $c={7} $r={21} $cs={3} $rs={18}><StatusChart /></ChartFrame>
            </Sheet>
            <VScroll><Grip $flat /><VThumb /></VScroll>
          </SheetRow>
          <HScroll><HThumb /><Grip /></HScroll>
          <TabBar>
            {navPaths.map((n) => (
              <TabNav key={n.label} type="button" $w={n.w} aria-label={n.label}>
                <Svg width={n.w} height="19" viewBox={`0 0 ${n.w} 19`}>{p(n.d, '#c3c2c0')}</Svg>
              </TabNav>
            ))}
            <TabNav type="button" $w={35} aria-label="Add sheet">
              <Svg width="22" height="20" viewBox="0 0 22 20">
                {p('M3.5 .5h10l4 4v15h-14z', '#c9c8c6', '#fff')}
                <circle cx="17" cy="9" r="3" fill="#2a5da8" />{p('M15 9h4M17 7v4', '#fff')}
              </Svg>
            </TabNav>
            <Tab type="button">Inventaire</Tab>
            <Tab type="button">Ajustements</Tab>
            <Tab type="button" $on>Tableau de bord</Tab>
            <Tab type="button">Instructions</Tab>
          </TabBar>
        </Work>
        <SideBar aria-label="Sidebar">
          {[['menu', 'Sidebar settings'], ['props', 'Properties'], ['styles', 'Styles'], ['gallery', 'Gallery'], ['compass', 'Navigator'], ['fx', 'Functions']].map(([n, l]) => (
            <SideButton key={n} type="button" aria-label={l}><Icon name={n} /></SideButton>
          ))}
          <SideHandle><Svg width="4" height="8" viewBox="0 0 4 8"><path d="M0 0l4 4-4 4z" fill="#222" /></Svg></SideHandle>
        </SideBar>
      </Middle>
      <StatusBar>
        <StatusCell $w={29}>
          <Svg width="14" height="14" viewBox="0 0 14 14">{p('M.5 .5h13v13h-13zM3.5 .5v5h7v-5M3.5 13.5v-4h7v4M5.5 11v2', '#8c8b89')}</Svg>
        </StatusCell>
        <StatusCell $w={205}>Sheet 3 of 4</StatusCell>
        <StatusCell $w={292} $grow>Selected: 1 row, 12 columns</StatusCell>
        <StatusCell $w={287} $grow>PageStyle_Tableau de bord</StatusCell>
        <StatusCell $w={222} $grow $bare $align="center">English (USA)</StatusCell>
        <StatusCell $w={60} />
        <StatusCell $w={41}>
          <Svg width="26" height="16" viewBox="0 0 26 16">
            {p('M1.5 4.5h14v8h-14z', '#5aa5d6', '#eef6fc')}{p('M19 1.5h6M22 1.5v13M19 14.5h6', '#6b6a68')}
          </Svg>
        </StatusCell>
        <StatusCell $w={26} />
        <StatusCell $w={27} />
        <StatusCell $w={240} $grow $align="center">Average: ; Sum: 0</StatusCell>
        <StatusCell $w={128}>
          <ZoomButton type="button" aria-label="Zoom out"><Svg width="10" height="10" viewBox="0 0 10 10">{p('M0 5h9', INK, 'none', 2)}</Svg></ZoomButton>
          <ZoomRange type="range" aria-label="Zoom" min="0" max="100" defaultValue="30" />
          <ZoomButton type="button" aria-label="Zoom in"><Svg width="10" height="10" viewBox="0 0 10 10">{p('M0 5h10M5 0v10', INK, 'none', 2)}</Svg></ZoomButton>
        </StatusCell>
        <StatusCell $w={43}>70%</StatusCell>
      </StatusBar>
    </Window>
  );
}
